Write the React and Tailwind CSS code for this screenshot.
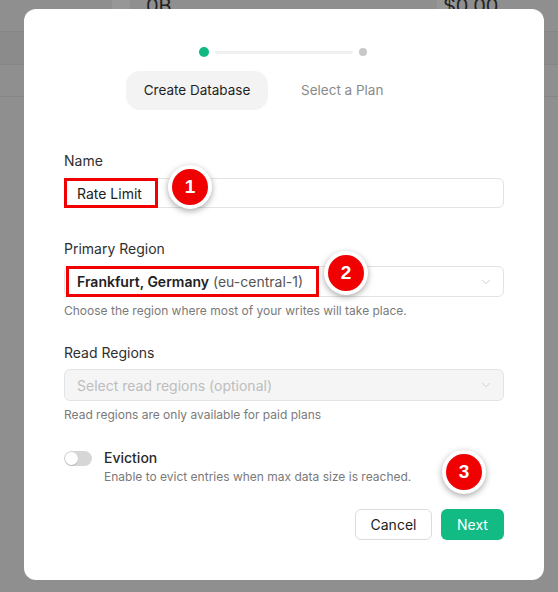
import React from "react";
import { ChevronDown } from "lucide-react";

function Badge({ n, className }) {
  return (
    <div
      className={`absolute flex h-[44px] w-[44px] items-center justify-center rounded-full border-[4px] border-white bg-[#f00000] text-[19px] font-semibold text-white shadow-[0_2px_6px_rgba(0,0,0,0.35)] ${className}`}
      style={{ fontFamily: "'Liberation Sans', Arial, sans-serif" }}
    >
      {n}
    </div>
  );
}

export default function App() {
  return (
    <div
      className="relative h-[592px] w-[558px] overflow-hidden bg-[#8f8f8f]"
      style={{ fontFamily: "Inter, 'Noto Sans', sans-serif" }}
    >
      {/* dimmed background page */}
      <div className="flex flex-col">
        <div className="relative h-[32px] border-b border-[#858585]">
          <div className="absolute left-[112px] top-0 h-[10px] w-[18px] bg-[#979797]" />
          <div className="absolute left-[146px] top-[-9px] text-[20px] text-[#222]">0B</div>
          <div className="absolute left-[437px] top-0 h-[10px] w-[18px] bg-[#979797]" />
          <div className="absolute left-[443px] top-[-9px] text-[20px] text-[#222]">$0.00</div>
        </div>
        <div className="h-[32px] bg-[#8b8b8b]" />
        <div className="h-[32px] border-t border-[#858585]" />
        <div className="h-[31px] border-t border-[#858585]" />
      </div>

      {/* modal */}
      <div className="absolute left-[24px] top-[9px] flex h-[571px] w-[520px] flex-col rounded-[12px] bg-white px-10 pt-[38px]">
        {/* stepper */}
        <div className="flex h-[10px] items-center justify-center">
          <div className="relative flex w-[170px] items-center">
            <div className="h-[10px] w-[10px] rounded-full bg-[#10b981]" />
            <div className="mx-[6px] h-[3px] flex-1 rounded bg-[#f0f0f0]" />
            <div className="mr-[2px] h-[8px] w-[8px] rounded-full bg-[#c8c8c8]" />
          </div>
        </div>

        {/* tabs */}
        <div className="ml-[62px] mt-[14px] flex items-center gap-[33px]">
          <div className="flex h-[39px] w-[142px] items-center justify-center rounded-[14px] bg-[#f3f3f3] text-[13.5px] text-[#1f1f1f]">
            Create Database
          </div>
          <div className="text-[13.5px] text-[#8a8a8a]">Select a Plan</div>
        </div>

        {/* Name */}
        <div className="mt-[41px] text-[14px] leading-[20px] text-[#2f2f2f]">Name</div>
        <div className="relative mt-[7px] flex h-[30px] items-center rounded-[6px] border border-[#e3e3e3] px-[12px]">
          <span className="text-[14px] text-[#222]">Rate Limit</span>
          <div className="absolute left-[-1px] top-[-1px] h-[30px] w-[94px] border-[3px] border-[#f00000]" />
        </div>

        {/* Primary Region */}
        <div className="mt-[31px] text-[14px] leading-[20px] text-[#2f2f2f]">Primary Region</div>
        <div className="relative mt-[7px] flex h-[31px] items-center justify-between rounded-[6px] border border-[#e3e3e3] pl-[12px] pr-[10px]">
          <span className="text-[14px] text-[#222]">
            <span className="font-semibold">Frankfurt, Germany</span>{" "}
            <span className="text-[#555]">(eu-central-1)</span>
          </span>
          <ChevronDown size={14} strokeWidth={1.2} className="text-[#bbbbbb]" />
          <div className="absolute left-[1px] top-[-1px] h-[31px] w-[253px] border-[3px] border-[#f00000]" />
        </div>
        <div className="mt-[6px] text-[12px] leading-[16px] text-[#7a7a7a]">
          Choose the region where most of your writes will take place.
        </div>

        {/* Read Regions */}
        <div className="mt-[24px] text-[14px] leading-[20px] text-[#2f2f2f]">Read Regions</div>
        <div className="mt-[6px] flex h-[32px] items-center justify-between rounded-[6px] border border-[#e3e3e3] bg-[#f5f5f5] pl-[12px] pr-[10px]">
          <span className="text-[14px] text-[#bdbdbd]">Select read regions (optional)</span>
          <ChevronDown size={14} strokeWidth={1.2} className="text-[#c4c4c4]" />
        </div>
        <div className="mt-[6px] text-[12px] leading-[16px] text-[#7a7a7a]">
          Read regions are only available for paid plans
        </div>

        {/* Eviction */}
        <div className="mt-[25px] flex gap-[12px]">
          <div className="mt-[3px] flex h-[15px] w-[28px] items-center rounded-full bg-[#d6d6d6] px-[1px]">
            <div className="h-[13px] w-[13px] rounded-full bg-white shadow-[0_1px_1px_rgba(0,0,0,0.15)]" />
          </div>
          <div className="flex flex-col">
            <span className="text-[14px] font-medium leading-[20px] text-[#2a2a2a]">Eviction</span>
            <span className="mt-[1px] text-[12px] leading-[16px] text-[#7a7a7a]">
              Enable to evict entries when max data size is reached.
            </span>
          </div>
        </div>

        {/* buttons */}
        <div className="mt-[24px] flex justify-end gap-[9px]">
          <button className="flex h-[31px] w-[77px] items-center justify-center rounded-[6px] border border-[#dcdcdc] bg-white text-[14px] text-[#222]">
            Cancel
          </button>
          <button className="flex h-[31px] w-[63px] items-center justify-center rounded-[6px] bg-[#12bb83] text-[14px] text-white">
            Next
          </button>
        </div>

        <Badge n="1" className="left-[144px] top-[156px]" />
        <Badge n="2" className="left-[300px] top-[242px]" />
        <Badge n="3" className="left-[418px] top-[441px]" />
      </div>
    </div>
  );
}
